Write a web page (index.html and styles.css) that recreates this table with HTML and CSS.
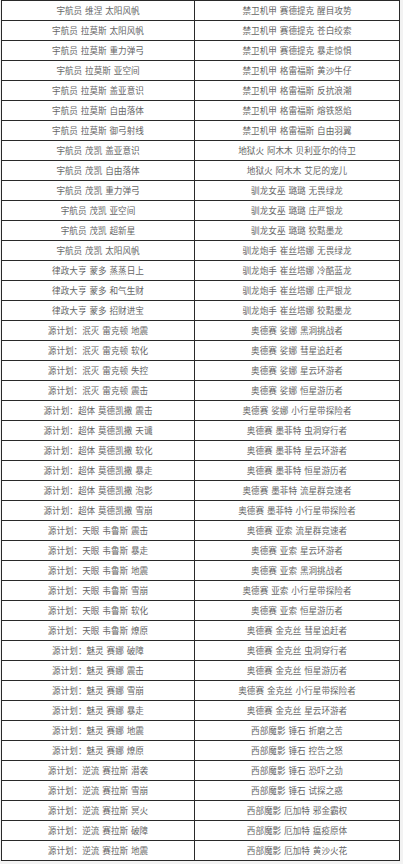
FILE: index.html
```html
<!DOCTYPE html>
<html lang="zh-CN">
<head>
<meta charset="utf-8">
<title>皮肤列表</title>
<link rel="stylesheet" href="styles.css">
</head>
<body>
<table class="skins">
<tbody>
<tr><td>宇航员 维涅 太阳风帆</td><td>禁卫机甲 赛德提克 醒目攻势</td></tr>
<tr><td>宇航员 拉莫斯 太阳风帆</td><td>禁卫机甲 赛德提克 苍白绞索</td></tr>
<tr><td>宇航员 拉莫斯 重力弹弓</td><td>禁卫机甲 赛德提克 暴走惊惧</td></tr>
<tr><td>宇航员 拉莫斯 亚空间</td><td>禁卫机甲 格雷福斯 黄沙牛仔</td></tr>
<tr><td>宇航员 拉莫斯 盖亚意识</td><td>禁卫机甲 格雷福斯 反抗浪潮</td></tr>
<tr><td>宇航员 拉莫斯 自由落体</td><td>禁卫机甲 格雷福斯 熔铁怒焰</td></tr>
<tr><td>宇航员 拉莫斯 御弓射线</td><td>禁卫机甲 格雷福斯 自由羽翼</td></tr>
<tr><td>宇航员 茂凯 盖亚意识</td><td>地狱火 阿木木 贝利亚尔的侍卫</td></tr>
<tr><td>宇航员 茂凯 自由落体</td><td>地狱火 阿木木 艾尼的宠儿</td></tr>
<tr><td>宇航员 茂凯 重力弹弓</td><td>驯龙女巫 璐璐 无畏绿龙</td></tr>
<tr><td>宇航员 茂凯 亚空间</td><td>驯龙女巫 璐璐 庄严银龙</td></tr>
<tr><td>宇航员 茂凯 超新星</td><td>驯龙女巫 璐璐 狡黠墨龙</td></tr>
<tr><td>宇航员 茂凯 太阳风帆</td><td>驯龙炮手 崔丝塔娜 无畏绿龙</td></tr>
<tr><td>律政大亨 蒙多 蒸蒸日上</td><td>驯龙炮手 崔丝塔娜 冷酷蓝龙</td></tr>
<tr><td>律政大亨 蒙多 和气生财</td><td>驯龙炮手 崔丝塔娜 庄严银龙</td></tr>
<tr><td>律政大亨 蒙多 招财进宝</td><td>驯龙炮手 崔丝塔娜 狡黠墨龙</td></tr>
<tr><td>源计划：泯灭 雷克顿 地震</td><td>奥德赛 娑娜 黑洞挑战者</td></tr>
<tr><td>源计划：泯灭 雷克顿 软化</td><td>奥德赛 娑娜 彗星追赶者</td></tr>
<tr><td>源计划：泯灭 雷克顿 失控</td><td>奥德赛 娑娜 星云环游者</td></tr>
<tr><td>源计划：泯灭 雷克顿 震击</td><td>奥德赛 娑娜 恒星游历者</td></tr>
<tr><td>源计划：超体 莫德凯撒 震击</td><td>奥德赛 娑娜 小行星带探险者</td></tr>
<tr><td>源计划：超体 莫德凯撒 天谴</td><td>奥德赛 墨菲特 虫洞穿行者</td></tr>
<tr><td>源计划：超体 莫德凯撒 软化</td><td>奥德赛 墨菲特 星云环游者</td></tr>
<tr><td>源计划：超体 莫德凯撒 暴走</td><td>奥德赛 墨菲特 恒星游历者</td></tr>
<tr><td>源计划：超体 莫德凯撒 泡影</td><td>奥德赛 墨菲特 流星群竞速者</td></tr>
<tr><td>源计划：超体 莫德凯撒 雪崩</td><td>奥德赛 墨菲特 小行星带探险者</td></tr>
<tr><td>源计划：天眼 韦鲁斯 震击</td><td>奥德赛 亚索 流星群竞速者</td></tr>
<tr><td>源计划：天眼 韦鲁斯 暴走</td><td>奥德赛 亚索 星云环游者</td></tr>
<tr><td>源计划：天眼 韦鲁斯 地震</td><td>奥德赛 亚索 黑洞挑战者</td></tr>
<tr><td>源计划：天眼 韦鲁斯 雪崩</td><td>奥德赛 亚索 小行星带探险者</td></tr>
<tr><td>源计划：天眼 韦鲁斯 软化</td><td>奥德赛 亚索 恒星游历者</td></tr>
<tr><td>源计划：天眼 韦鲁斯 燎原</td><td>奥德赛 金克丝 彗星追赶者</td></tr>
<tr><td>源计划：魅灵 赛娜 破障</td><td>奥德赛 金克丝 虫洞穿行者</td></tr>
<tr><td>源计划：魅灵 赛娜 震击</td><td>奥德赛 金克丝 恒星游历者</td></tr>
<tr><td>源计划：魅灵 赛娜 雪崩</td><td>奥德赛 金克丝 小行星带探险者</td></tr>
<tr><td>源计划：魅灵 赛娜 暴走</td><td>奥德赛 金克丝 星云环游者</td></tr>
<tr><td>源计划：魅灵 赛娜 地震</td><td>西部魔影 锤石 折磨之苦</td></tr>
<tr><td>源计划：魅灵 赛娜 燎原</td><td>西部魔影 锤石 控告之怒</td></tr>
<tr><td>源计划：逆流 赛拉斯 潜袭</td><td>西部魔影 锤石 恐吓之劲</td></tr>
<tr><td>源计划：逆流 赛拉斯 雪崩</td><td>西部魔影 锤石 试探之惑</td></tr>
<tr><td>源计划：逆流 赛拉斯 冥火</td><td>西部魔影 厄加特 邪金霸权</td></tr>
<tr><td>源计划：逆流 赛拉斯 破障</td><td>西部魔影 厄加特 瘟疫原体</td></tr>
<tr><td>源计划：逆流 赛拉斯 地震</td><td>西部魔影 厄加特 黄沙火花</td></tr>
</tbody>
</table>
</body>
</html>
```
FILE: styles.css
```css
html, body {
  margin: 0;
  padding: 0;
  background: #f2f2f2;
}
body {
  padding-left: 1px;
  font-family: "Noto Sans CJK SC", "Microsoft YaHei", sans-serif;
}
.skins {
  border-collapse: collapse;
  width: 399px;
  background: #fff;
  table-layout: fixed;
}
.skins td {
  border: 1px solid #2a2a2a;
  height: 19px;
  padding: 0;
  text-align: center;
  vertical-align: middle;
  font-size: 8.6px;
  line-height: 19px;
  color: #666;
  white-space: nowrap;
  word-spacing: 1px;
}
.skins td:first-child {
  width: 192px;
}
```
